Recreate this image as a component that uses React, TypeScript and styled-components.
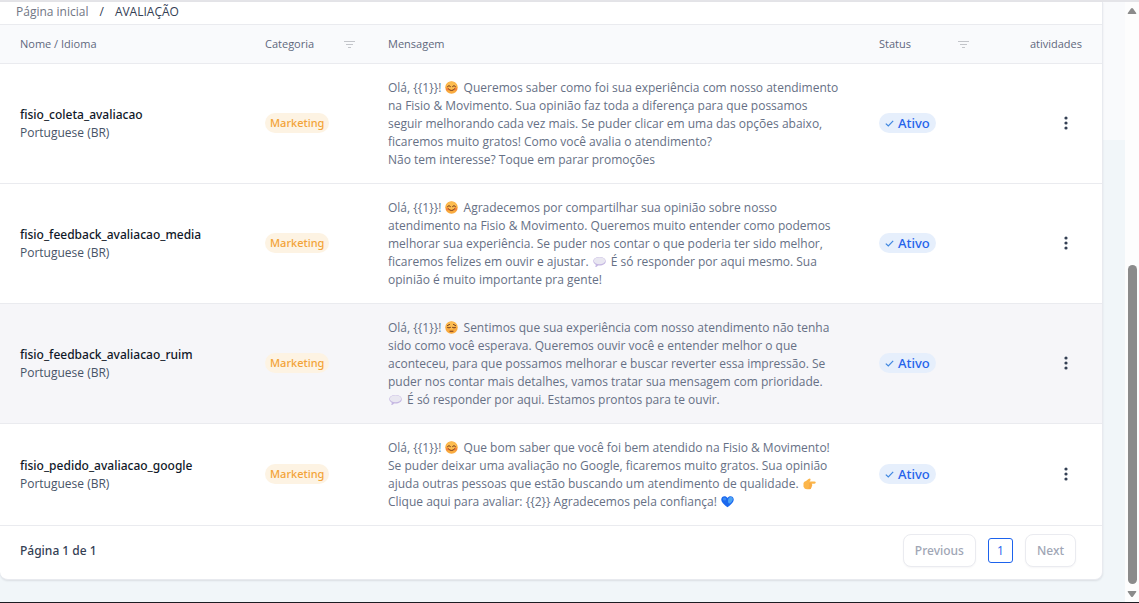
import React from 'react';
import styled, { createGlobalStyle, css } from 'styled-components';

const mediumFont = "'Noto Sans', 'Open Sans', sans-serif";

const GlobalStyle = createGlobalStyle`
  *, *::before, *::after { box-sizing: border-box; }
  body {
    margin: 0;
    background: #f1f6f9;
    color: #475467;
    font-family: 'Open Sans', 'Noto Sans', sans-serif;
    font-size: 12px;
    line-height: 18px;
  }
  button { font: inherit; cursor: pointer; }
`;

const Page = styled.div`
  display: flex;
  min-height: 100vh;
  border-top: 2px solid #e4e4e8;
  border-bottom: 1px solid #1c1c22;
  background: linear-gradient(#f9fafc 138px, #f1f6f9 138px);
`;

const Main = styled.main`
  flex: 1;
  min-width: 0;
  padding: 0 22px 22px 0;
`;

const Card = styled.section`
  background: #ffffff;
  border: solid #e8eaef;
  border-width: 0 1px 1px 0;
  border-radius: 0 0 8px 8px;
  box-shadow: 0 1px 2px rgba(16, 24, 40, 0.1);
`;

const Breadcrumb = styled.nav`
  display: flex;
  align-items: center;
  gap: 11px;
  height: 22px;
  padding: 0 16px 2px;
  color: #344054;
`;

const CrumbLink = styled.a`
  color: #717684;
  text-decoration: none;
`;

const Table = styled.table`
  width: 100%;
  border-collapse: separate;
  border-spacing: 0;
  table-layout: fixed;
`;

const Col = styled.col<{ $width?: string }>`
  width: ${({ $width }) => $width ?? 'auto'};
`;

const HeadCell = styled.th<{ $end?: boolean; $filter?: boolean }>`
  height: 40px;
  padding: 0 ${({ $filter }) => ($filter ? '13px' : '20px')} 0 20px;
  border: solid #eaebef;
  border-width: 1px 0;
  background: #f9fafc;
  color: #5f687c;
  font-size: 11px;
  font-weight: 500;
  text-align: ${({ $end }) => ($end ? 'right' : 'left')};
`;

const HeadContent = styled.div`
  display: flex;
  align-items: center;
  justify-content: space-between;
`;

const IconButton = styled.button`
  display: inline-flex;
  align-items: center;
  justify-content: center;
  padding: 0;
  border: 0;
  background: none;
  color: #344054;
`;

const MenuButton = styled(IconButton)`
  display: flex;
  margin-left: auto;
`;

const Row = styled.tr<{ $active?: boolean }>`
  background: ${({ $active }) => ($active ? '#f6f6f9' : '#ffffff')};
`;

const Cell = styled.td`
  padding: 15px 20px 14px;
  border-bottom: 1px solid #eaebef;
  vertical-align: middle;
`;

const BadgeCell = styled(Cell)`
  padding: 14px 20px 15px;
`;

const MenuCell = styled(Cell)`
  padding: 14px 34px 15px 20px;
`;

const Name = styled.div`
  color: #101828;
  font-family: ${mediumFont};
  font-weight: 500;
`;

const Message = styled.p`
  margin: 0;
  color: #667085;
  white-space: pre;
`;

const pill = css`
  display: flex;
  align-items: center;
  width: fit-content;
  height: 20px;
  border-radius: 10px;
  font-family: ${mediumFont};
  font-weight: 500;
`;

const Category = styled.span`
  ${pill}
  padding: 0 5px;
  background: #fdf3e3;
  color: #f3a338;
  font-size: 11px;
`;

const Status = styled.span`
  ${pill}
  gap: 4px;
  padding: 0 6px;
  background: #e6effc;
  color: #2563eb;
  font-size: 13px;
`;

const Footer = styled.footer`
  display: flex;
  align-items: center;
  justify-content: space-between;
  padding: 8px 26px 12px 20px;
`;

const PageInfo = styled.span`
  color: #344054;
  font-family: ${mediumFont};
  font-weight: 500;
`;

const Pager = styled.div`
  display: flex;
  align-items: center;
  gap: 12px;
`;

const StepButton = styled.button`
  height: 33px;
  padding: 0 11px;
  border: 1px solid #eaebf0;
  border-radius: 8px;
  background: #ffffff;
  box-shadow: 0 1px 2px rgba(16, 24, 40, 0.04);
  color: #a0a6b5;
  font-family: ${mediumFont};
  font-weight: 500;
`;

const PageButton = styled.button`
  width: 25px;
  height: 25px;
  padding: 0;
  border: 1px solid #1d63ed;
  border-radius: 3px;
  background: #ffffff;
  color: #1d63ed;
`;

const Track = styled.div`
  display: flex;
  flex-direction: column;
  align-items: center;
  width: 14px;
  padding: 5px 0 4px;
  background: #fdfdfd;
`;

const TrackSpace = styled.div`
  flex: 250;
`;

const Thumb = styled.div`
  flex: 320;
  width: 9px;
  margin-bottom: 6px;
  border-radius: 5px;
  background: #8b8b8b;
`;

const Emoji = styled.svg`
  width: 13px;
  height: 13px;
  margin: 0 2px 0 1px;
  vertical-align: -2px;
`;

const FilterIcon = () => (
  <svg width="11" height="9" viewBox="0 0 11 9" fill="none" stroke="#c3c5ca">
    <path d="M0 1.5h11M2 4.5h7M4 7.5h3" />
  </svg>
);

const KebabIcon = () => (
  <svg width="4" height="14" viewBox="0 0 4 14" fill="currentColor">
    <circle cx="2" cy="2" r="1.6" />
    <circle cx="2" cy="7" r="1.6" />
    <circle cx="2" cy="12" r="1.6" />
  </svg>
);

const CheckIcon = () => (
  <svg width="9" height="7" viewBox="0 0 9 7" fill="none" stroke="#3f87e0" strokeWidth="1.2">
    <path d="M.8 3.6 3.3 6 8.2.9" />
  </svg>
);

const Arrow = ({ down }: { down?: boolean }) => (
  <svg width="10" height="8" viewBox="0 0 10 8" fill="#8b8b8b">
    <path
      d={
        down
          ? 'M1.4 1h7.2q1.2 0 .6 1L6 6.6q-1 1-2 0L.8 2q-.6-1 .6-1z'
          : 'M1.4 7h7.2q1.2 0 .6-1L6 1.4q-1-1-2 0L.8 6q-.6 1 .6 1z'
      }
    />
  </svg>
);

const Face = ({ sad }: { sad?: boolean }) => (
  <Emoji viewBox="0 0 26 26" role="img" aria-label={sad ? 'triste' : 'sorriso'}>
    <circle cx="13" cy="13" r="12.5" fill="#f9ab3f" />
    <ellipse cx="13" cy="9" rx="10" ry="7.5" fill="#fcbc50" />
    {!sad && <circle cx="5" cy="16" r="3" fill="#f5813f" />}
    {!sad && <circle cx="21" cy="16" r="3" fill="#f5813f" />}
    <g fill="none" stroke="#70371f" strokeWidth="2" strokeLinecap="round">
      {sad ? (
        <path d="M5 13q3 2 6 0M15 13q3 2 6 0M10 20.500h6M5 9l4-2M21 9l-4-2" />
      ) : (
        <path d="M5 11q3-4 6 0M15 11q3-4 6 0M7 16q6 6.500 12 0" />
      )}
    </g>
  </Emoji>
);

const Bubble = () => (
  <Emoji viewBox="0 0 26 26" role="img" aria-label="balão de fala">
    <path d="M13 4c7.500 0 12.500 3.500 12.500 8.500S20.500 21 13 21h-3q-2 3-6 3 2-2 1.500-4.500Q.5 17 .5 12.500C.5 7.500 5.500 4 13 4z" fill="#c5b7e2" />
    <ellipse cx="13" cy="11.500" rx="11.500" ry="7" fill="#e9e7f1" />
  </Emoji>
);

const Hand = () => (
  <Emoji viewBox="0 0 26 26" role="img" aria-label="aponta para a direita">
    <path d="M1 12q1-3 5-4l5-4q3-2 4 0t-2 5h10q2.500 0 2.500 2.200T23 13.500h-6q2 1 1.500 3-.2 1.500-1 2 .5 2-1 3 0 3-3.500 3H8q-5 0-7-5z" fill="#fcb64a" />
    <path d="M12 14h5.500M12 18h5M11 22h5" stroke="#f0933a" strokeWidth="1.200" fill="none" />
  </Emoji>
);

const Heart = () => (
  <Emoji viewBox="0 0 26 26" role="img" aria-label="coração azul">
    <path d="M13 24.500C8 21 .5 15 .5 9 .5 2 9.500 0 13 6c3.500-6 12.500-4 12.500 3 0 6-7.500 12-12.500 15.500z" fill="#1b68ee" />
    <path d="M14 12c0-7 4-9 7.500-7.500S24 11 20 15s-6 1-6-3z" fill="#4da3f4" />
    <ellipse cx="7" cy="8" rx="3.500" ry="3" fill="#3b8cf4" />
  </Emoji>
);

interface Template {
  name: string;
  message: React.ReactNode;
  active?: boolean;
}

const templates: Template[] = [
  {
    name: 'fisio_coleta_avaliacao',
    message: (
      <>
        Olá, {'{{1}}'}! <Face /> Queremos saber como foi sua experiência com nosso atendimento
        <br />
        na Fisio &amp; Movimento. Sua opinião faz toda a diferença para que possamos
        <br />
        seguir melhorando cada vez mais. Se puder clicar em uma das opções abaixo,
        <br />
        ficaremos muito gratos! Como você avalia o atendimento?
        <br />
        Não tem interesse? Toque em parar promoções
      </>
    ),
  },
  {
    name: 'fisio_feedback_avaliacao_media',
    message: (
      <>
        Olá, {'{{1}}'}! <Face /> Agradecemos por compartilhar sua opinião sobre nosso
        <br />
        atendimento na Fisio &amp; Movimento. Queremos muito entender como podemos
        <br />
        melhorar sua experiência. Se puder nos contar o que poderia ter sido melhor,
        <br />
        ficaremos felizes em ouvir e ajustar. <Bubble /> É só responder por aqui mesmo. Sua
        <br />
        opinião é muito importante pra gente!
      </>
    ),
  },
  {
    name: 'fisio_feedback_avaliacao_ruim',
    active: true,
    message: (
      <>
        Olá, {'{{1}}'}! <Face sad /> Sentimos que sua experiência com nosso atendimento não tenha
        <br />
        sido como você esperava. Queremos ouvir você e entender melhor o que
        <br />
        aconteceu, para que possamos melhorar e buscar reverter essa impressão. Se
        <br />
        puder nos contar mais detalhes, vamos tratar sua mensagem com prioridade.
        <br />
        <Bubble /> É só responder por aqui. Estamos prontos para te ouvir.
      </>
    ),
  },
  {
    name: 'fisio_pedido_avaliacao_google',
    message: (
      <>
        Olá, {'{{1}}'}! <Face /> Que bom saber que você foi bem atendido na Fisio &amp; Movimento!
        <br />
        Se puder deixar uma avaliação no Google, ficaremos muito gratos. Sua opinião
        <br />
        ajuda outras pessoas que estão buscando um atendimento de qualidade. <Hand />
        <br />
        Clique aqui para avaliar: {'{{2}}'} Agradecemos pela confiança! <Heart />
      </>
    ),
  },
];

export default function App() {
  return (
    <>
      <GlobalStyle />
      <Page>
        <Main>
          <Card>
            <Breadcrumb aria-label="Navegação">
              <CrumbLink href="#">Página inicial</CrumbLink>
              <span>/</span>
              <span aria-current="page">AVALIAÇÃO</span>
            </Breadcrumb>
            <Table>
              <colgroup>
                <Col $width="245px" />
                <Col $width="123px" />
                <Col />
                <Col $width="123px" />
                <Col $width="120px" />
              </colgroup>
              <thead>
                <tr>
                  <HeadCell scope="col">Nome / Idioma</HeadCell>
                  <HeadCell scope="col" $filter>
                    <HeadContent>
                      Categoria
                      <IconButton type="button" aria-label="Filtrar categoria"><FilterIcon /></IconButton>
                    </HeadContent>
                  </HeadCell>
                  <HeadCell scope="col">Mensagem</HeadCell>
                  <HeadCell scope="col" $filter>
                    <HeadContent>
                      Status
                      <IconButton type="button" aria-label="Filtrar status"><FilterIcon /></IconButton>
                    </HeadContent>
                  </HeadCell>
                  <HeadCell scope="col" $end>atividades</HeadCell>
                </tr>
              </thead>
              <tbody>
                {templates.map(({ name, message, active }) => (
                  <Row key={name} $active={active}>
                    <Cell>
                      <Name>{name}</Name>
                      <div>Portuguese (BR)</div>
                    </Cell>
                    <BadgeCell><Category>Marketing</Category></BadgeCell>
                    <Cell><Message>{message}</Message></Cell>
                    <BadgeCell><Status><CheckIcon />Ativo</Status></BadgeCell>
                    <MenuCell>
                      <MenuButton type="button" aria-label={`Ações de ${name}`}><KebabIcon /></MenuButton>
                    </MenuCell>
                  </Row>
                ))}
              </tbody>
            </Table>
            <Footer>
              <PageInfo>Página 1 de 1</PageInfo>
              <Pager>
                <StepButton type="button">Previous</StepButton>
                <PageButton type="button" aria-current="page">1</PageButton>
                <StepButton type="button">Next</StepButton>
              </Pager>
            </Footer>
          </Card>
        </Main>
        <Track aria-hidden="true">
          <Arrow />
          <TrackSpace />
          <Thumb />
          <Arrow down />
        </Track>
      </Page>
    </>
  );
}
